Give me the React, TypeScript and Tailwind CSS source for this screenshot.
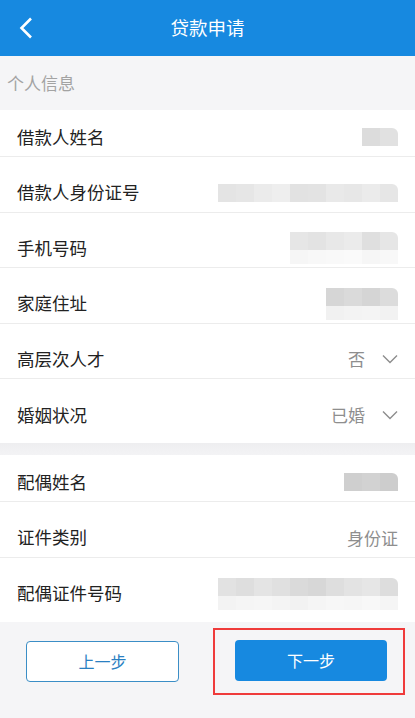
import React from 'react'

const font = { fontFamily: '"Noto Sans CJK SC", "Noto Sans", sans-serif' }

// pixelated shades used by the redacted (mosaic) values
function Mosaic({ shades, h = 18, cell = 18, below }: { shades: string[]; h?: number; cell?: number; below?: string[] }) {
  return (
    <div className="flex flex-col">
      <div className="flex rounded-tr-[6px] overflow-hidden">
        {shades.map((c, i) => (
          <div key={i} style={{ background: c, width: cell, height: h }} />
        ))}
      </div>
      {below && (
        <div className="flex">
          {below.map((c, i) => (
            <div key={i} style={{ background: c, width: cell, height: 14 }} />
          ))}
        </div>
      )}
    </div>
  )
}

function Chevron() {
  return (
    <svg width="16" height="10" viewBox="0 0 16 10" fill="none" className="ml-[17px]">
      <path d="M1 1.5 L8 8.5 L15 1.5" stroke="#8d8d8d" strokeWidth="1.4" />
    </svg>
  )
}

function Row({ label, children, last }: { label: string; children?: React.ReactNode; last?: boolean }) {
  return (
    <div className="bg-white h-[55.5px] flex flex-col pb-[8.5px]">
      <div className={`h-[47px] pt-[8px] flex items-center justify-between pl-[17px] pr-[17px] ${last ? '' : 'border-b border-[#ececec]'}`}>
        <span className="text-[17.5px] text-[#222]">{label}</span>
        <div className="flex items-center text-[17px] text-[#8e8e8e]">{children}</div>
      </div>
    </div>
  )
}

export default function App() {
  return (
    <div className="w-[415px] h-[718px] bg-[#f5f5f7] flex flex-col overflow-hidden" style={font}>
      {/* Header */}
      <div className="h-[56px] bg-[#1789e0] flex items-center relative">
        <svg width="14" height="22" viewBox="0 0 14 22" fill="none" className="ml-[19px]">
          <path d="M12 1.5 L2.5 11 L12 20.5" stroke="white" strokeWidth="2.6" />
        </svg>
        <span className="flex-1 text-center text-white text-[18.5px] mr-[33px]">贷款申请</span>
      </div>

      {/* Section title */}
      <div className="h-[54px] flex items-center pl-[7px] text-[17px] text-[#a3a3a3]">个人信息</div>

      <Row label="借款人姓名">
        <Mosaic shades={['#dcdcdc', '#e1e1e1']} />
      </Row>
      <Row label="借款人身份证号">
        <Mosaic shades={['#e4e4e4', '#e6e6e6', '#ebebeb', '#eeeeee', '#e2e2e2', '#e3e3e3', '#e9e9e9', '#e7e7e7', '#ebebeb', '#e6e6e6']} />
      </Row>
      <Row label="手机号码">
        <Mosaic
          shades={['#e6e6e6', '#e3e3e3', '#e8e8e8', '#ebebeb', '#dfdfdf', '#e6e6e6']}
          below={['#f6f6f6', '#f8f8f8', '#f9f9f9', '#fafafa', '#f6f6f6', '#f8f8f8']}
        />
      </Row>
      <Row label="家庭住址">
        <Mosaic shades={['#d6d6d6', '#dadada', '#d5d5d5', '#dcdcdc']} below={['#f1f1f1', '#f3f3f3', '#f4f4f4', '#f2f2f2']} />
      </Row>
      <Row label="高层次人才">
        <span>否</span>
        <Chevron />
      </Row>
      <Row label="婚姻状况" last>
        <span>已婚</span>
        <Chevron />
      </Row>

      <div className="h-[12px] bg-gradient-to-b from-[#eeeef0] to-[#f3f3f5]" />

      <Row label="配偶姓名">
        <Mosaic shades={['#cfcfcf', '#d2d2d2', '#cdcdcd']} />
      </Row>
      <Row label="证件类别">
        <span>身份证</span>
      </Row>
      <Row label="配偶证件号码" last>
        <Mosaic
          shades={['#e2e2e2', '#dedede', '#e4e4e4', '#e0e0e0', '#dadada', '#d7d7d7', '#dedede', '#e3e3e3', '#e6e6e6', '#dddddd']}
          below={['#f3f3f3', '#f5f5f5', '#f6f6f6', '#f4f4f4', '#f2f2f2', '#f5f5f5', '#f7f7f7', '#f6f6f6', '#f8f8f8', '#f5f5f5']}
        />
      </Row>

      {/* Footer buttons */}
      <div className="flex items-start pt-[6px]">
        <button className="ml-[26px] mt-[13px] w-[153px] h-[41px] rounded-[4px] border-[1.5px] border-[#3b8ec6] bg-white text-[#2a80c2] text-[16px]">
          上一步
        </button>
        <div className="ml-[34px] w-[192px] h-[67px] border-2 border-[#ef3b3b] pl-[20px] pt-[10px]">
          <button className="w-[152px] h-[41px] rounded-[4px] bg-[#1789e0] text-white text-[16px]">下一步</button>
        </div>
      </div>
    </div>
  )
}
